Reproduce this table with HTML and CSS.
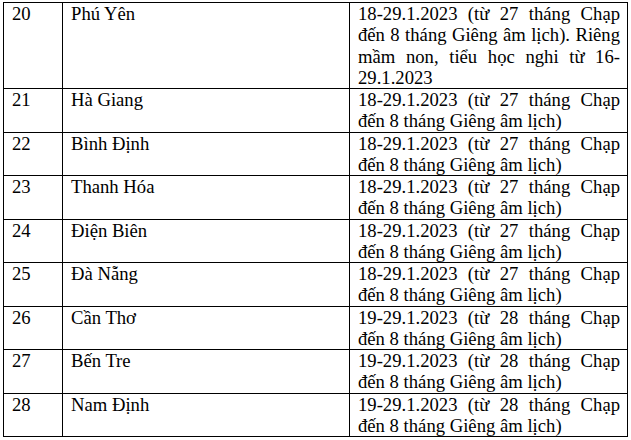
FILE: index.html
```html
<!DOCTYPE html>
<html lang="vi">
<head>
<meta charset="utf-8">
<link rel="stylesheet" href="styles.css">
</head>
<body>
<table class="tbl">
  <colgroup>
    <col class="c-num">
    <col class="c-name">
    <col class="c-date">
  </colgroup>
  <tbody>
    <tr><td>20</td><td>Phú Yên</td><td class="date">18-29.1.2023 (từ 27 tháng Chạp đến 8 tháng Giêng âm lịch). Riêng mầm non, tiểu học nghi từ 16-<wbr>29.1.2023</td></tr>
    <tr><td>21</td><td>Hà Giang</td><td class="date">18-29.1.2023 (từ 27 tháng Chạp đến 8 tháng Giêng âm lịch)</td></tr>
    <tr><td>22</td><td>Bình Định</td><td class="date">18-29.1.2023 (từ 27 tháng Chạp đến 8 tháng Giêng âm lịch)</td></tr>
    <tr><td>23</td><td>Thanh Hóa</td><td class="date">18-29.1.2023 (từ 27 tháng Chạp đến 8 tháng Giêng âm lịch)</td></tr>
    <tr><td>24</td><td>Điện Biên</td><td class="date">18-29.1.2023 (từ 27 tháng Chạp đến 8 tháng Giêng âm lịch)</td></tr>
    <tr><td>25</td><td>Đà Nẵng</td><td class="date">18-29.1.2023 (từ 27 tháng Chạp đến 8 tháng Giêng âm lịch)</td></tr>
    <tr><td>26</td><td>Cần Thơ</td><td class="date">19-29.1.2023 (từ 28 tháng Chạp đến 8 tháng Giêng âm lịch)</td></tr>
    <tr><td>27</td><td>Bến Tre</td><td class="date">19-29.1.2023 (từ 28 tháng Chạp đến 8 tháng Giêng âm lịch)</td></tr>
    <tr><td>28</td><td>Nam Định</td><td class="date">19-29.1.2023 (từ 28 tháng Chạp đến 8 tháng Giêng âm lịch)</td></tr>
  </tbody>
</table>
</body>
</html>
```
FILE: styles.css
```css
html, body {
  margin: 0;
  padding: 0;
  background: #fff;
}
body {
  padding: 2px 0 0 3px;
  font-family: "Liberation Serif", "Times New Roman", Tinos, serif;
  font-size: 18.67px;
  line-height: 21.25px;
  color: #000;
}
.tbl {
  border-collapse: collapse;
  table-layout: fixed;
  width: 624px;
}
.c-num { width: 59px; }
.c-name { width: 287px; }
.c-date { width: 278px; }
.tbl td {
  border: 1px solid #000;
  padding: 0 7px 0 8px;
  vertical-align: top;
  text-align: left;
}
.tbl td.date {
  text-align: justify;
}
```
